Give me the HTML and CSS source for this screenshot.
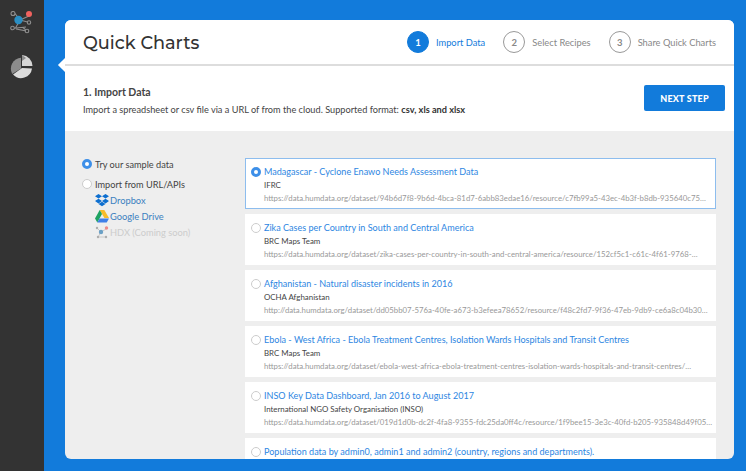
FILE: index.html
```html
<!DOCTYPE html>
<html lang="en">
<head>
<meta charset="utf-8">
<title>Quick Charts</title>
<link rel="stylesheet" href="styles.css">
</head>
<body>
<div class="app">
  <nav class="side">
    <svg class="side-logo" width="26" height="24" viewBox="0 0 26 24">
      <g fill="none" stroke="#8f8f8f" stroke-width="1.1">
        <path d="M6 2.500 11 9M11 9 20 5M11 9 20.500 11.500M11 9 6.500 17M2.500 17.500 17 16M14 16.500 18 20 7 18"/>
        <circle cx="4" cy="2.500" r="2" fill="#333"/>
        <circle cx="20" cy="11.500" r="1.700" fill="#333"/>
        <circle cx="3.500" cy="17" r="1.800" fill="#333"/>
        <circle cx="18" cy="20" r="1.800" fill="#333"/>
      </g>
      <circle cx="9.500" cy="9" r="4.200" fill="#2a8fc4"/>
      <circle cx="20" cy="3" r="3" fill="#f0625f"/>
    </svg>
    <svg class="side-pie" width="24" height="24" viewBox="0 0 24 24">
      <path d="M12 5V13.500L3.200 19A11 11 0 0 1 12 2.700Z" fill="#8c8c8c"/>
      <path d="M13 13 4 19.500A11 11 0 0 0 23 13.500Z" fill="#dcdcdc"/>
      <path d="M13 0V11H23.500A11 11 0 0 0 13 0Z" fill="#d6d6d6"/>
      <path d="M13 0V6L17 3Z" fill="#8c8c8c"/>
    </svg>
  </nav>
  <main class="stage">
    <span class="pointer"></span>
    <section class="panel">
      <header class="top">
        <h1 class="brand">Quick Charts</h1>
        <ol class="steps">
          <li class="step step-on"><span class="num">1</span>Import Data</li>
          <li class="step"><span class="num">2</span>Select Recipes</li>
          <li class="step"><span class="num">3</span>Share Quick Charts</li>
        </ol>
      </header>
      <div class="intro">
        <div>
          <h2 class="intro-title">1. Import Data</h2>
          <p class="intro-text">Import a spreadsheet or csv file via a URL of from the cloud. Supported format: <b>csv, xls and xlsx</b></p>
        </div>
        <button class="next">NEXT STEP</button>
      </div>
      <div class="body">
        <aside class="sources">
          <div class="src"><span class="radio radio-on"></span>Try our sample data</div>
          <div class="src"><span class="radio"></span>Import from URL/APIs</div>
          <div class="sub">
            <svg width="14" height="13" viewBox="0 0 14 13"><path fill="#0d6fd0" d="M3.500 0 7 2.300 3.500 4.600 0 2.300ZM10.500 0 14 2.300 10.500 4.600 7 2.300ZM3.500 4.800 7 7.100 3.500 9.400 0 7.100ZM10.500 4.800 14 7.100 10.500 9.400 7 7.100ZM3.500 10 7 7.800 10.500 10 7 12.300Z"/></svg>
            Dropbox
          </div>
          <div class="sub">
            <svg width="14" height="13" viewBox="0 0 14 13"><path fill="#f7bb2a" d="M4.700 0H9.300L14 8H9.400Z"/><path fill="#1ea362" d="M4.700 0 7 4 2.300 12.500 0 8.400Z"/><path fill="#3f7fe8" d="M4.600 8.400H14L11.700 12.500H2.300Z"/></svg>
            Google Drive
          </div>
          <div class="sub sub-off">
            <svg width="14" height="13" viewBox="0 0 14 13"><g fill="none" stroke="#aaa" stroke-width=".7"><path d="M2 2 6 6 11 3M6 6 3 11 11 11"/></g><circle cx="2" cy="2" r="1.200" fill="#999"/><circle cx="6" cy="6" r="2.200" fill="#3f86b8"/><circle cx="11.500" cy="2" r="1.700" fill="#ee6a66"/><circle cx="3" cy="11" r="1.200" fill="#999"/><circle cx="11" cy="11" r="1.200" fill="#999"/></svg>
            HDX (Coming soon)
          </div>
        </aside>
        <div class="list">
          <article class="item item-on"><span class="radio radio-on"></span><div class="item-main"><h3 class="item-title">Madagascar - Cyclone Enawo Needs Assessment Data</h3><p class="item-org">IFRC</p><p class="item-url">https://data.humdata.org/dataset/94b6d7f8-9b6d-4bca-81d7-6abb83edae16/resource/c7fb99a5-43ec-4b3f-b8db-935640c75…</p></div></article>
          <article class="item"><span class="radio"></span><div class="item-main"><h3 class="item-title">Zika Cases per Country in South and Central America</h3><p class="item-org">BRC Maps Team</p><p class="item-url">https://data.humdata.org/dataset/zika-cases-per-country-in-south-and-central-america/resource/152cf5c1-c61c-4f61-9768-…</p></div></article>
          <article class="item"><span class="radio"></span><div class="item-main"><h3 class="item-title">Afghanistan - Natural disaster incidents in 2016</h3><p class="item-org">OCHA Afghanistan</p><p class="item-url">http://data.humdata.org/dataset/dd05bb07-576a-40fe-a673-b3efeea78652/resource/f48c2fd7-9f36-47eb-9db9-ce6a8c04b30…</p></div></article>
          <article class="item"><span class="radio"></span><div class="item-main"><h3 class="item-title">Ebola - West Africa - Ebola Treatment Centres, Isolation Wards Hospitals and Transit Centres</h3><p class="item-org">BRC Maps Team</p><p class="item-url">https://data.humdata.org/dataset/ebola-west-africa-ebola-treatment-centres-isolation-wards-hospitals-and-transit-centres/…</p></div></article>
          <article class="item"><span class="radio"></span><div class="item-main"><h3 class="item-title">INSO Key Data Dashboard, Jan 2016 to August 2017</h3><p class="item-org">International NGO Safety Organisation (INSO)</p><p class="item-url">https://data.humdata.org/dataset/019d1d0b-dc2f-4fa8-9355-fdc25da0ff4c/resource/1f9bee15-3e3c-40fd-b205-935848d49f05…</p></div></article>
          <article class="item"><span class="radio"></span><div class="item-main"><h3 class="item-title">Population data by admin0, admin1 and admin2 (country, regions and departments).</h3></div></article>
        </div>
      </div>
    </section>
  </main>
</div>
</body>
</html>
```
FILE: styles.css
```css
* { box-sizing: border-box; }
html, body { margin: 0; height: 100%; overflow: hidden; }
body { font-family: Lato, "Open Sans", sans-serif; color: #333; }
h1, h2, h3, p, ol { margin: 0; padding: 0; }
.app { display: flex; width: 746px; height: 471px; }
.side { width: 44px; flex: none; background: #333; display: flex; flex-direction: column; align-items: center; padding-top: 11px; gap: 20px; }
.side-logo { display: block; }
.side-pie { margin-left: -2px; }
.stage { position: relative; flex: 1; min-width: 0; background: #127bdb; padding: 20px 12px 12px 21px; }
.pointer { position: absolute; left: 16px; top: 60px; width: 10px; height: 10px; background: #fff; transform: rotate(45deg); }
.panel { position: relative; height: 439px; background: #eee; border-radius: 6px; overflow: hidden; display: flex; flex-direction: column; }
.top { height: 46px; flex: none; background: #fff; border-bottom: 2px solid #ddd; display: flex; align-items: center; justify-content: space-between; padding: 0 18px; }
.brand { font-family: "Montserrat", Lato, sans-serif; font-size: 17.700px; font-weight: 500; color: #333; }
.steps { list-style: none; display: flex; gap: 18px; }
.step { display: flex; align-items: center; gap: 7px; font-size: 9.300px; color: #888; }
.num { width: 22px; height: 22px; border-radius: 50%; border: 1.500px solid #999; display: flex; align-items: center; justify-content: center; font-size: 9.500px; font-weight: 700; color: #888; }
.step-on { color: #127bdb; }
.step-on .num { background: #127bdb; border-color: #127bdb; color: #fff; }
.intro { height: 65px; flex: none; background: #fff; display: flex; justify-content: space-between; padding: 19px 9px 0 18px; }
.intro-title { font-size: 10.500px; font-weight: 700; color: #444; line-height: 14px; }
.intro-text { font-size: 9.200px; margin-top: 4px; color: #444; line-height: 14px; }
.intro-text b { font-weight: 700; color: #333; }
.next { width: 81px; height: 26px; border: 0; border-radius: 2px; background: #127bdb; color: #fff; font: 900 9px Lato, sans-serif; letter-spacing: .2px; }
.body { flex: 1; display: flex; padding: 23px 18px 0 17px; min-height: 0; }
.sources { width: 163px; flex: none; }
.src { display: flex; align-items: center; gap: 3px; font-size: 9.200px; color: #444; height: 20px; }
.sub { display: flex; align-items: center; height: 16px; padding-left: 13px; font-size: 9.300px; color: #3a80c0; }
.src + .sub { margin-top: -2px; }
.sub svg { flex: none; margin-right: 1px; }
.sub-off { color: #ccc; }
.sub-off svg { opacity: .75; }
.radio { width: 10px; height: 10px; border-radius: 50%; flex: none; background: #fff; border: 1px solid #ccc; }
.radio-on { background: #fff; border: 3px solid #3d8fe8; }
.list { flex: 1; min-width: 0; display: flex; flex-direction: column; gap: 5px; margin-top: 4px; }
.item { height: 51px; flex: none; background: #fff; display: flex; gap: 3px; padding: 6px 8px 0 5px; border: 1px solid #fff; }
.item-on { border-color: #8dbdee; }
.item .radio { margin-top: 2px; }
.item-main { flex: 1; min-width: 0; }
.item-title { font-size: 9.050px; font-weight: 400; color: #2d86e2; white-space: nowrap; line-height: 14px; }
.item-org { font-size: 7.900px; color: #444; line-height: 13px; }
.item-url { font-size: 7.800px; color: #999; line-height: 12px; white-space: nowrap; }
```
